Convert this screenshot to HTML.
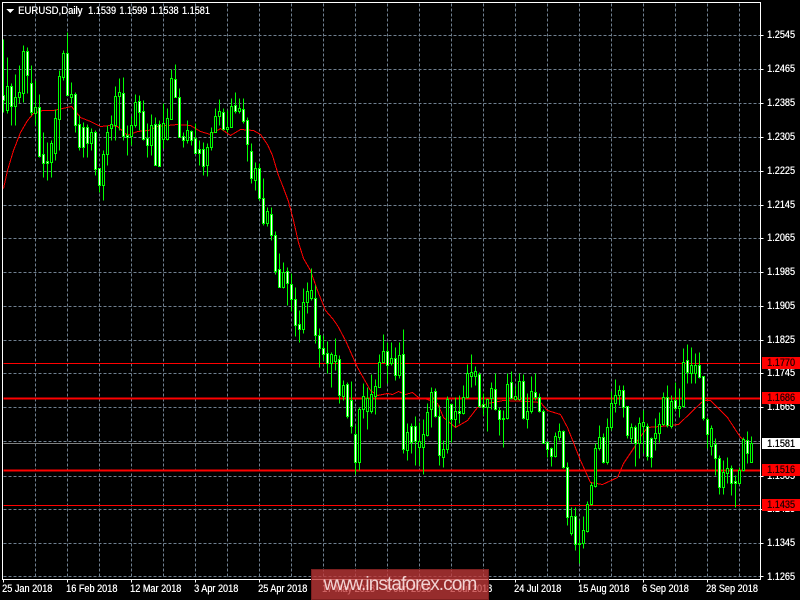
<!DOCTYPE html>
<html><head><meta charset="utf-8"><style>
html,body{margin:0;padding:0;background:#000;width:800px;height:600px;overflow:hidden}
#c{position:relative;width:800px;height:600px;background:#000;font-family:"Liberation Sans",sans-serif;font-size:11px;color:#fff;overflow:hidden}
svg{position:absolute;left:0;top:0}
.t{position:absolute;line-height:14px;height:14px;white-space:nowrap;transform:scaleX(.83);transform-origin:0 50%;text-shadow:.3px 0 0 currentColor}
.r{left:767px}
.b{top:582px}
.box{position:absolute;left:762px;width:38px;background:#f00}
#wm{position:absolute;left:311px;top:569px;width:176px;height:29px;background:rgba(192,56,56,.78);border:1px solid rgba(120,30,30,.9);color:rgba(255,235,235,.86);font-size:19px;letter-spacing:-.9px;line-height:29px;text-align:center}
</style></head><body><div id="c">
<svg width="800" height="600" viewBox="0 0 800 600" shape-rendering="crispEdges">
<g transform="translate(.5,.5)" fill="none">
<path stroke="#708090" stroke-dasharray="3 2" d="M3 35H760M3 69H760M3 103H760M3 137H760M3 171H760M3 205H760M3 238H760M3 272H760M3 306H760M3 340H760M3 373H760M3 407H760M3 441H760M3 476H760M3 509H760M3 543H760M3 576H760M35 3V578M67 3V578M99 3V578M131 3V578M163 3V578M195 3V578M227 3V578M259 3V578M291 3V578M323 3V578M355 3V578M387 3V578M419 3V578M451 3V578M483 3V578M515 3V578M547 3V578M579 3V578M611 3V578M643 3V578M675 3V578M707 3V578M739 3V578"/>
<path stroke="#808080" d="M3 443H760"/>
<path stroke="#f00" d="M3 363H760M3 505H760"/>
<path stroke="#f00" stroke-width="2" d="M3 398H760M3 470H760"/>
<polyline stroke="#f00" points="3,188 7,170 13,150 20,132 27,120 33,113 42,110 53,110 62,108 71,106 80,117 90,121 100,126 110,125 117,126 127,135 137,131 148,130 157,126 177,124 190,125 200,131 210,134 220,128 230,135 240,129 253,130 260,134 267,144 272,155 278,175 282,185 288,201 293,220 298,242 303,258 310,270 317,290 325,310 332,318 337,325 345,340 357,367 370,390 377,395 387,393 392,394 398,391 405,394 412,392 418,397 427,399 437,403 443,417 455,427 467,420 477,407 487,403 503,400 527,401 540,402 547,410 560,414 567,427 580,460 590,482 602,484 617,477 623,463 635,445 637,440 647,427 660,426 678,424 703,400 710,400 727,417 740,437 745,440"/>
<path stroke="#0f0" d="M3 39V112M7 57V113M11 83V125M15 74V125M19 65V103M23 45V102M27 47V93M31 65V115M35 80V125M39 94V157M43 132V177M47 142V180M51 140V177M55 109V160M59 70V150M63 50V80M67 32V95M71 82V103M75 92V132M79 115V150M83 122V157M87 124V157M91 128V150M95 130V175M99 168V192M103 150V200M107 125V165M111 115V140M115 86V140M119 78V130M123 77V140M127 125V155M131 116V145M135 94V127M139 95V130M143 100V140M147 123V157M151 114V155M155 117V165M159 120V166M163 103V148M167 108V140M171 69V119M175 64V97M179 88V137M183 132V147M187 120V143M191 130V145M195 123V153M199 140V165M203 142V175M207 143V176M211 127V150M215 108V132M219 99V125M223 108V130M227 110V132M231 98V127M235 92V113M239 98V113M243 98V123M247 117V161M251 143V183M255 162V190M259 163V200M263 178V225M267 207V226M271 207V240M275 231V274M279 253V287M283 262V288M287 267V305M291 273V311M295 287V336M299 310V342M303 288V333M307 282V313M311 268V300M315 285V343M319 328V367M323 335V360M327 341V373M331 352V387M335 338V370M339 355V403M343 380V400M347 382V418M351 381V433M355 425V474M359 407V470M363 383V418M367 387V429M371 374V413M375 379V414M379 354V387M383 334V362M387 342V383M391 342V365M395 347V380M399 342V378M403 329V453M407 423V460M411 423V453M415 416V465M419 422V465M423 419V474M427 403V436M431 387V427M435 388V417M439 405V465M443 440V467M447 396V453M451 403V442M455 397V427M459 395V423M463 385V414M467 364V398M471 354V387M475 366V385M479 372V407M483 393V415M487 398V431M491 382V409M495 373V410M499 407V435M503 410V447M507 373V419M511 371V399M515 386V400M519 373V400M523 374V419M527 393V428M531 376V413M535 373V400M539 393V412M543 409V443M547 441V457M551 447V466M555 432V457M559 423V440M563 430V468M567 462V525M571 507V535M575 507V550M579 520V563M583 516V548M587 501V532M591 482V505M595 443V487M599 425V450M603 433V463M607 418V464M611 391V430M615 379V412M619 385V405M623 385V417M627 406V438M631 423V443M635 425V466M639 417V458M643 410V453M647 423V460M651 437V467M655 418V450M659 412V442M663 392V425M667 385V427M671 395V428M675 382V410M679 388V417M683 348V407M687 344V383M691 347V383M695 353V383M699 352V378M703 376V420M707 417V448M711 425V455M715 438V475M719 455V494M723 460V494M727 457V483M731 465V495M735 475V507M739 467V484M743 437V471M747 431V463M751 436V462"/>
<path stroke="#0f0" fill="#000" d="M6 86h2v24h-2zM14 97h2v9h-2zM18 92h2v5h-2zM22 51h2v42h-2zM34 107h2v6h-2zM50 143h2v19h-2zM54 118h2v35h-2zM58 76h2v43h-2zM62 53h2v24h-2zM70 94h2v3h-2zM90 132h2v11h-2zM102 154h2v31h-2zM106 132h2v22h-2zM110 124h2v4h-2zM114 96h2v29h-2zM118 92h2v4h-2zM130 125h2v11h-2zM134 102h2v23h-2zM150 125h2v20h-2zM162 123h2v16h-2zM166 118h2v21h-2zM170 78h2v41h-2zM186 130h2v10h-2zM206 147h2v18h-2zM210 132h2v15h-2zM214 116h2v16h-2zM218 111h2v5h-2zM226 127h2v2h-2zM230 106h2v21h-2zM238 108h2v3h-2zM254 168h2v12h-2zM266 211h2v12h-2zM282 272h2v15h-2zM302 302h2v27h-2zM306 291h2v11h-2zM310 290h2v8h-2zM330 354h2v9h-2zM334 355h2v6h-2zM342 385h2v11h-2zM358 409h2v53h-2zM362 396h2v13h-2zM366 398h2v13h-2zM370 394h2v17h-2zM374 386h2v10h-2zM378 362h2v25h-2zM382 351h2v11h-2zM390 358h2v5h-2zM398 355h2v20h-2zM406 432h2v18h-2zM418 441h2v6h-2zM422 434h2v13h-2zM426 412h2v23h-2zM430 392h2v17h-2zM442 449h2v8h-2zM446 399h2v50h-2zM454 411h2v8h-2zM462 397h2v16h-2zM466 373h2v24h-2zM470 372h2v4h-2zM474 371h2v5h-2zM486 399h2v8h-2zM490 388h2v10h-2zM502 418h2v1h-2zM506 384h2v34h-2zM514 396h2v3h-2zM518 381h2v18h-2zM526 411h2v8h-2zM530 391h2v20h-2zM554 436h2v20h-2zM558 431h2v6h-2zM570 516h2v17h-2zM582 530h2v13h-2zM586 504h2v27h-2zM590 485h2v19h-2zM594 448h2v38h-2zM598 437h2v11h-2zM606 427h2v35h-2zM610 403h2v24h-2zM614 395h2v8h-2zM618 390h2v5h-2zM630 427h2v11h-2zM638 423h2v20h-2zM642 422h2v4h-2zM654 433h2v5h-2zM658 424h2v9h-2zM662 397h2v27h-2zM670 401h2v25h-2zM678 406h2v2h-2zM682 362h2v44h-2zM690 365h2v8h-2zM694 365h2v8h-2zM710 428h2v18h-2zM722 472h2v15h-2zM726 468h2v5h-2zM738 470h2v13h-2zM742 439h2v31h-2zM750 443h2v19h-2z"/>
<path stroke="#0f0" fill="#fff" d="M2 95h2v5h-2zM10 86h2v20h-2zM26 51h2v24h-2zM30 83h2v29h-2zM38 107h2v49h-2zM42 154h2v9h-2zM46 161h2v2h-2zM66 53h2v42h-2zM74 94h2v31h-2zM78 124h2v23h-2zM82 127h2v20h-2zM86 127h2v16h-2zM94 132h2v37h-2zM98 168h2v17h-2zM122 93h2v43h-2zM126 135h2v2h-2zM138 101h2v11h-2zM142 111h2v28h-2zM146 138h2v7h-2zM154 124h2v41h-2zM158 124h2v42h-2zM174 79h2v18h-2zM178 97h2v40h-2zM182 136h2v4h-2zM190 131h2v9h-2zM194 138h2v15h-2zM198 149h2v4h-2zM202 149h2v17h-2zM222 112h2v17h-2zM234 105h2v6h-2zM242 109h2v12h-2zM246 120h2v24h-2zM250 151h2v27h-2zM258 168h2v30h-2zM262 198h2v25h-2zM270 214h2v21h-2zM274 235h2v36h-2zM278 269h2v18h-2zM286 271h2v12h-2zM290 284h2v15h-2zM294 299h2v26h-2zM298 324h2v5h-2zM314 298h2v37h-2zM318 335h2v13h-2zM322 348h2v6h-2zM326 353h2v10h-2zM338 359h2v36h-2zM346 384h2v32h-2zM350 400h2v26h-2zM354 434h2v28h-2zM386 351h2v14h-2zM394 358h2v17h-2zM402 354h2v95h-2zM410 426h2v16h-2zM414 426h2v15h-2zM434 391h2v25h-2zM438 416h2v39h-2zM450 404h2v15h-2zM458 411h2v2h-2zM478 374h2v32h-2zM482 404h2v3h-2zM494 389h2v20h-2zM498 410h2v9h-2zM510 382h2v16h-2zM522 381h2v37h-2zM534 392h2v5h-2zM538 397h2v14h-2zM542 411h2v32h-2zM546 442h2v7h-2zM550 448h2v8h-2zM562 431h2v36h-2zM566 467h2v50h-2zM574 516h2v28h-2zM578 543h2v1h-2zM602 437h2v25h-2zM622 390h2v17h-2zM626 406h2v29h-2zM634 427h2v16h-2zM646 426h2v30h-2zM650 438h2v19h-2zM666 397h2v28h-2zM674 400h2v8h-2zM686 360h2v12h-2zM698 365h2v12h-2zM702 376h2v42h-2zM706 419h2v15h-2zM714 444h2v14h-2zM718 458h2v29h-2zM730 468h2v15h-2zM734 481h2v2h-2zM746 440h2v13h-2z"/>
<path stroke="#fff" d="M2 2H760V579H2ZM3 579V582M67 579V582M131 579V582M195 579V582M259 579V582M323 579V582M387 579V582M451 579V582M515 579V582M579 579V582M643 579V582M707 579V582M760 35H763M760 69H763M760 103H763M760 137H763M760 171H763M760 205H763M760 238H763M760 272H763M760 306H763M760 340H763M760 373H763M760 407H763M760 476H763M760 509H763M760 543H763M760 576H763"/>
</g>
<polygon points="6,9 14,9 10,13" fill="#fff"/>
</svg>
<span class="t" style="left:18px;top:4px;transform:scaleX(.87)">EURUSD,Daily</span>
<span class="t" style="left:88px;top:4px;word-spacing:1px">1.1539 1.1599 1.1538 1.1581</span>
<span class="t r" style="top:28px">1.2545</span>
<span class="t r" style="top:62px">1.2465</span>
<span class="t r" style="top:96px">1.2385</span>
<span class="t r" style="top:130px">1.2305</span>
<span class="t r" style="top:164px">1.2225</span>
<span class="t r" style="top:198px">1.2145</span>
<span class="t r" style="top:231px">1.2065</span>
<span class="t r" style="top:265px">1.1985</span>
<span class="t r" style="top:299px">1.1905</span>
<span class="t r" style="top:333px">1.1825</span>
<span class="t r" style="top:366px">1.1745</span>
<span class="t r" style="top:400px">1.1665</span>
<span class="t r" style="top:469px">1.1505</span>
<span class="t r" style="top:502px">1.1425</span>
<span class="t r" style="top:536px">1.1345</span>
<span class="t r" style="top:570px">1.1265</span>
<div class="box" style="top:357px;height:12px"></div><span class="t r" style="top:356px;color:#200">1.1770</span>
<div class="box" style="top:392px;height:12px"></div><span class="t r" style="top:391px;color:#200">1.1686</span>
<div class="box" style="top:464px;height:12px"></div><span class="t r" style="top:463px;color:#200">1.1516</span>
<div class="box" style="top:499px;height:12px"></div><span class="t r" style="top:498px;color:#200">1.1435</span>
<div class="box" style="top:438px;height:11px;background:#fff"></div><span class="t r" style="top:437px;color:#000">1.1581</span>
<span class="t b" style="left:2px">25 Jan 2018</span>
<span class="t b" style="left:66px">16 Feb 2018</span>
<span class="t b" style="left:130px">12 Mar 2018</span>
<span class="t b" style="left:194px">3 Apr 2018</span>
<span class="t b" style="left:258px">25 Apr 2018</span>
<span class="t b" style="left:322px">17 May 2018</span>
<span class="t b" style="left:386px">8 Jun 2018</span>
<span class="t b" style="left:450px">2 Jul 2018</span>
<span class="t b" style="left:514px">24 Jul 2018</span>
<span class="t b" style="left:578px">15 Aug 2018</span>
<span class="t b" style="left:642px">6 Sep 2018</span>
<span class="t b" style="left:706px">28 Sep 2018</span>
<div id="wm">www.instaforex.com</div>
</div></body></html>
